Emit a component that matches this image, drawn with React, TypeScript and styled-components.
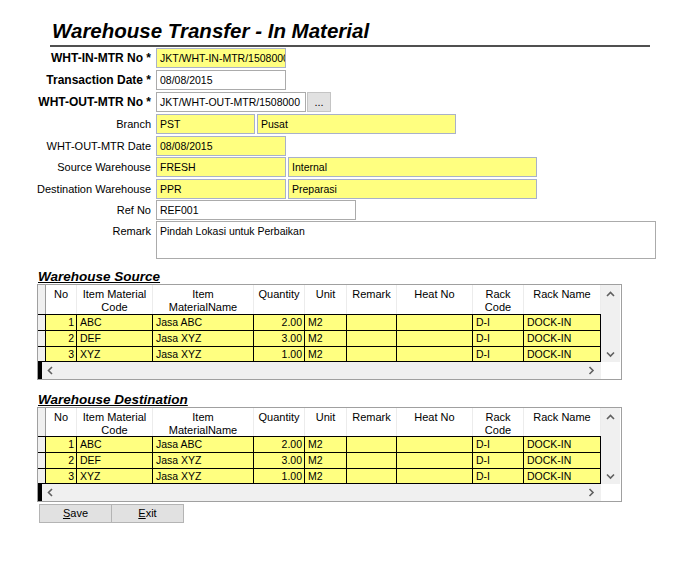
import React from "react";
import styled, { createGlobalStyle } from "styled-components";

const GlobalStyle = createGlobalStyle`
  html, body { margin: 0; padding: 0; background: #ffffff; }
  body { font-family: "Liberation Sans", Arial, sans-serif; color: #000; }
`;

const YELLOW = "#ffff80";

const Page = styled.div`
  width: 700px;
  height: 565px;
  box-sizing: border-box;
  padding-top: 17px;
`;

const TitleBar = styled.div`
  margin-left: 50px;
  width: 600px;
  border-bottom: 2px solid #505050;
  padding-left: 2px;
  box-sizing: border-box;
`;

const Title = styled.h1`
  margin: 0;
  font-family: "Liberation Sans", Arial, sans-serif;
  font-size: 20.5px;
  font-weight: bold;
  font-style: italic;
  line-height: 28px;
`;

const Form = styled.div`
  display: grid;
  grid-template-columns: 151px 1fr;
  column-gap: 5px;
  grid-template-rows: 22px 22px 22px 22px 21px 22px 21px 21px 38px;
  margin-top: 1px;
`;

const Label = styled.div<{ $bold?: boolean }>`
  text-align: right;
  font-size: ${(p) => (p.$bold ? "12px" : "11px")};
  font-weight: ${(p) => (p.$bold ? "bold" : "normal")};
  line-height: 20px;
  white-space: nowrap;
`;

const FieldRow = styled.div`
  display: flex;
  align-items: flex-start;
  gap: 2px;
`;

const Input = styled.div<{ $w: number; $yellow?: boolean; $h?: number }>`
  width: ${(p) => p.$w}px;
  height: ${(p) => p.$h ?? 20}px;
  box-sizing: border-box;
  border: 1px solid ${(p) => (p.$yellow ? "#a9b1c9" : "#ababab")};
  background: ${(p) => (p.$yellow ? YELLOW : "#ffffff")};
  padding: 0 3px;
  font-size: 10.5px;
  line-height: 18px;
  white-space: nowrap;
  overflow: hidden;
`;

const DotsButton = styled.div`
  width: 24px;
  height: 20px;
  box-sizing: border-box;
  background: #e1e1e1;
  border: 1px solid #c4c4c4;
  font-size: 11px;
  line-height: 18px;
  text-align: center;
  margin-left: -1px;
`;

const Section = styled.section<{ $top: number }>`
  margin-left: 37px;
  margin-top: ${(p) => p.$top}px;
`;

const SectionTitle = styled.div`
  font-size: 13.5px;
  font-weight: bold;
  font-style: italic;
  text-decoration: underline;
  line-height: 15px;
  padding-left: 1px;
`;

const GridBox = styled.div`
  width: 585px;
  box-sizing: border-box;
  border: 1px solid #a0a0a0;
`;

const GridTop = styled.div`
  display: flex;
`;

const Table = styled.div<{ $head: number }>`
  width: 563px;
  display: grid;
  grid-template-columns: 8px 31px 76px 101px 51px 42px 50px 76px 51px 77px;
  grid-template-rows: ${(p) => p.$head}px repeat(3, 16px);
`;

const HeadCell = styled.div<{ $indicator?: boolean }>`
  font-size: 11px;
  line-height: 13px;
  text-align: center;
  padding-top: 3px;
  box-sizing: border-box;
  background: ${(p) => (p.$indicator ? "#f0f0f0" : "#ffffff")};
  border-right: 1px solid ${(p) => (p.$indicator ? "#9a9a9a" : "#ececec")};
  overflow: hidden;
`;

const Cell = styled.div<{ $align?: "left" | "right"; $indicator?: boolean; $last?: boolean }>`
  box-sizing: border-box;
  border-top: 1px solid #000;
  border-right: 1px solid #000;
  border-bottom: ${(p) => (p.$last ? "1px solid #000" : "none")};
  background: ${(p) => (p.$indicator ? "#f0f0f0" : YELLOW)};
  font-size: 10.5px;
  line-height: 15px;
  text-align: ${(p) => p.$align ?? "left"};
  padding: 0 2px 0 3px;
  white-space: nowrap;
  overflow: hidden;
`;

const VScroll = styled.div`
  width: 19px;
  background: #f0f0f0;
  display: flex;
  flex-direction: column;
  justify-content: space-between;
  align-items: center;
  padding: 6px 0 4px;
  box-sizing: border-box;
`;

const GridBottom = styled.div`
  display: flex;
  height: 17px;
`;

const HScroll = styled.div`
  width: 563px;
  background: #f0f0f0;
  display: flex;
  align-items: center;
  justify-content: space-between;
  padding-right: 6px;
  box-sizing: border-box;
`;

const HLeft = styled.div`
  display: flex;
  align-items: center;
  height: 100%;
  gap: 5px;
`;

const Thumb = styled.div`
  width: 4px;
  height: 100%;
  background: #000;
`;

const Corner = styled.div`
  width: 19px;
  background: #ffffff;
`;

const Buttons = styled.div`
  display: flex;
  margin-left: 39px;
  margin-top: 2px;
`;

const Button = styled.div`
  width: 73px;
  height: 19px;
  box-sizing: border-box;
  background: #e1e1e1;
  border: 1px solid #b4b4b4;
  font-size: 11px;
  line-height: 17px;
  text-align: center;
  & + & { margin-left: -1px; }
  u { text-decoration: underline; }
`;

const Chevron = ({ dir }: { dir: "up" | "down" | "left" | "right" }) => {
  const pts: Record<string, string> = {
    up: "1,5 4.5,1.5 8,5",
    down: "1,1.5 4.5,5 8,1.5",
    left: "5,1 1.5,4.5 5,8",
    right: "1.5,1 5,4.5 1.5,8",
  };
  const vertical = dir === "up" || dir === "down";
  return (
    <svg width={vertical ? 9 : 7} height={vertical ? 7 : 9} viewBox={vertical ? "0 0 9 7" : "0 0 7 9"}>
      <polyline points={pts[dir]} fill="none" stroke="#606060" strokeWidth="1.6" />
    </svg>
  );
};

type Row = { no: number; code: string; name: string; qty: string; unit: string; rack: string; rackName: string };

const rows: Row[] = [
  { no: 1, code: "ABC", name: "Jasa ABC", qty: "2.00", unit: "M2", rack: "D-I", rackName: "DOCK-IN" },
  { no: 2, code: "DEF", name: "Jasa XYZ", qty: "3.00", unit: "M2", rack: "D-I", rackName: "DOCK-IN" },
  { no: 3, code: "XYZ", name: "Jasa XYZ", qty: "1.00", unit: "M2", rack: "D-I", rackName: "DOCK-IN" },
];

const DataGrid = ({ head }: { head: number }) => (
  <GridBox>
    <GridTop>
      <Table $head={head}>
        <HeadCell $indicator />
        <HeadCell>No</HeadCell>
        <HeadCell>Item Material<br />Code</HeadCell>
        <HeadCell>Item<br />MaterialName</HeadCell>
        <HeadCell>Quantity</HeadCell>
        <HeadCell>Unit</HeadCell>
        <HeadCell>Remark</HeadCell>
        <HeadCell>Heat No</HeadCell>
        <HeadCell>Rack<br />Code</HeadCell>
        <HeadCell>Rack Name</HeadCell>
        {rows.map((r, i) => {
          const last = i === rows.length - 1;
          return (
            <React.Fragment key={r.no}>
              <Cell $indicator $last={last} />
              <Cell $align="right" $last={last}>{r.no}</Cell>
              <Cell $last={last}>{r.code}</Cell>
              <Cell $last={last}>{r.name}</Cell>
              <Cell $align="right" $last={last}>{r.qty}</Cell>
              <Cell $last={last}>{r.unit}</Cell>
              <Cell $last={last} />
              <Cell $last={last} />
              <Cell $last={last}>{r.rack}</Cell>
              <Cell $last={last}>{r.rackName}</Cell>
            </React.Fragment>
          );
        })}
      </Table>
      <VScroll>
        <Chevron dir="up" />
        <Chevron dir="down" />
      </VScroll>
    </GridTop>
    <GridBottom>
      <HScroll>
        <HLeft>
          <Thumb />
          <Chevron dir="left" />
        </HLeft>
        <Chevron dir="right" />
      </HScroll>
      <Corner />
    </GridBottom>
  </GridBox>
);

export default function App() {
  return (
    <>
      <GlobalStyle />
      <Page>
        <TitleBar>
          <Title>Warehouse Transfer - In Material</Title>
        </TitleBar>
        <Form>
          <Label $bold>WHT-IN-MTR No *</Label>
          <FieldRow>
            <Input $w={130} $yellow>JKT/WHT-IN-MTR/1508000001</Input>
          </FieldRow>

          <Label $bold>Transaction Date *</Label>
          <FieldRow>
            <Input $w={130}>08/08/2015</Input>
          </FieldRow>

          <Label $bold>WHT-OUT-MTR No *</Label>
          <FieldRow>
            <Input $w={150}>JKT/WHT-OUT-MTR/1508000</Input>
            <DotsButton>...</DotsButton>
          </FieldRow>

          <Label>Branch</Label>
          <FieldRow>
            <Input $w={99} $yellow>PST</Input>
            <Input $w={199} $yellow>Pusat</Input>
          </FieldRow>

          <Label>WHT-OUT-MTR Date</Label>
          <FieldRow>
            <Input $w={130} $yellow>08/08/2015</Input>
          </FieldRow>

          <Label>Source Warehouse</Label>
          <FieldRow>
            <Input $w={130} $yellow>FRESH</Input>
            <Input $w={249} $yellow>Internal</Input>
          </FieldRow>

          <Label>Destination Warehouse</Label>
          <FieldRow>
            <Input $w={130} $yellow>PPR</Input>
            <Input $w={249} $yellow>Preparasi</Input>
          </FieldRow>

          <Label>Ref No</Label>
          <FieldRow>
            <Input $w={200}>REF001</Input>
          </FieldRow>

          <Label>Remark</Label>
          <FieldRow>
            <Input $w={500} $h={38}>Pindah Lokasi untuk Perbaikan</Input>
          </FieldRow>
        </Form>

        <Section $top={10}>
          <SectionTitle>Warehouse Source</SectionTitle>
          <DataGrid head={29} />
        </Section>

        <Section $top={12}>
          <SectionTitle>Warehouse Destination</SectionTitle>
          <DataGrid head={28} />
        </Section>

        <Buttons>
          <Button><u>S</u>ave</Button>
          <Button><u>E</u>xit</Button>
        </Buttons>
      </Page>
    </>
  );
}
